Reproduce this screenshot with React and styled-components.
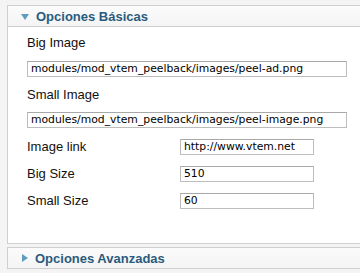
import React from "react";
import styled, { createGlobalStyle } from "styled-components";

const Global = createGlobalStyle`
  html, body { margin: 0; padding: 0; background: #f4f4f4; overflow: hidden; }
  body { font-family: "Liberation Sans", Arial, sans-serif; }
`;

const Page = styled.div`
  width: 360px;
  height: 273px;
  padding: 5px 0 0 7px;
  box-sizing: border-box;
  display: flex;
  flex-direction: column;
  gap: 3px;
`;

const Panel = styled.div`
  width: 360px;
  border: 1px solid #cfcfcf;
  background: #fff;
`;

const Header = styled.div`
  height: 20px;
  display: flex;
  align-items: center;
  gap: 7px;
  padding-left: 13px;
  background: linear-gradient(#fbfbfb, #f4f4f4);
  border-bottom: ${(p) => (p.open ? "1px solid #cfcfcf" : "none")};
  font-size: 13px;
  font-weight: bold;
  color: #2a5b7d;
`;

const Arrow = styled.span`
  width: 0;
  height: 0;
  ${(p) =>
    p.open
      ? `border-left: 4px solid transparent; border-right: 4px solid transparent; border-top: 6px solid #5d9cbc; margin-top: 1px;`
      : `border-top: 4px solid transparent; border-bottom: 4px solid transparent; border-left: 6px solid #5d9cbc; margin-left: 1px;`}
`;

const Body = styled.div`
  padding: 8px 0 10px 19px;
  height: 216px;
  box-sizing: border-box;
  display: flex;
  flex-direction: column;
`;

const Label = styled.div`
  font-size: 13px;
  color: #111;
  line-height: 16px;
  margin: ${(p) => p.m || "0"};
`;

const Input = styled.div`
  box-sizing: border-box;
  width: ${(p) => p.w}px;
  height: 16px;
  border: 1px solid #bdbdbd;
  border-top-color: #a8a8a8;
  font-family: "DejaVu Sans", sans-serif;
  font-size: 10.8px;
  line-height: 14px;
  padding-left: 3px;
  color: #000;
  white-space: nowrap;
  overflow: hidden;
  margin: ${(p) => p.m || "0"};
`;

const Row = styled.div`
  display: grid;
  grid-template-columns: 153px auto;
  align-items: center;
  height: 16px;
  margin-top: ${(p) => p.mt}px;
`;

export default function App() {
  return (
    <>
      <Global />
      <Page>
        <Panel>
          <Header open>
            <Arrow open />
            Opciones Básicas
          </Header>
          <Body>
            <Label>Big Image</Label>
            <Input w={320} m="10px 0 0">modules/mod_vtem_peelback/images/peel-ad.png</Input>
            <Label m="10px 0 0">Small Image</Label>
            <Input w={320} m="9px 0 0">modules/mod_vtem_peelback/images/peel-image.png</Input>
            <Row mt={11}>
              <Label>Image link</Label>
              <Input w={134}>http://www.vtem.net</Input>
            </Row>
            <Row mt={11}>
              <Label>Big Size</Label>
              <Input w={134}>510</Input>
            </Row>
            <Row mt={11}>
              <Label>Small Size</Label>
              <Input w={134}>60</Input>
            </Row>
          </Body>
        </Panel>
        <Panel>
          <Header>
            <Arrow />
            Opciones Avanzadas
          </Header>
        </Panel>
      </Page>
    </>
  );
}
